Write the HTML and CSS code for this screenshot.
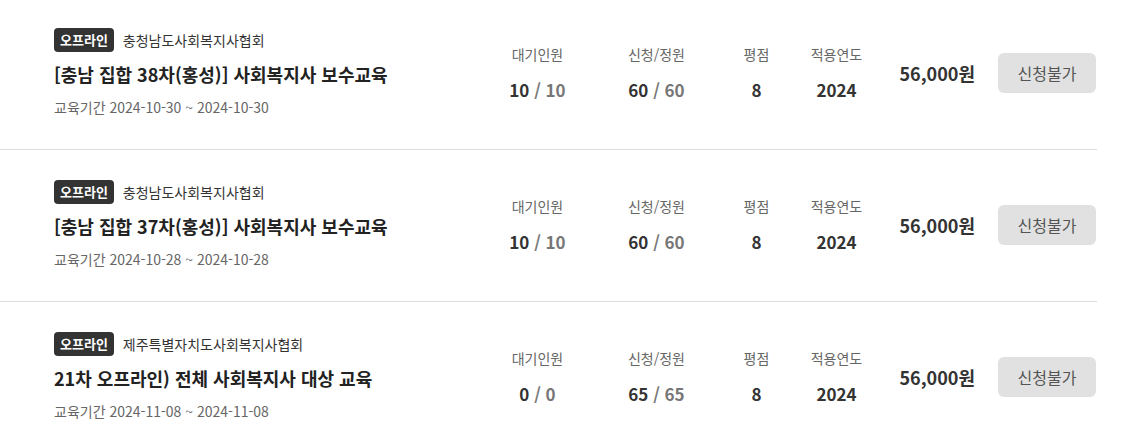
FILE: index.html
```html
<!DOCTYPE html>
<html lang="ko">
<head>
<meta charset="utf-8">
<title>교육 목록</title>
<link rel="stylesheet" href="styles.css">
</head>
<body>
<ul class="course-list">
  <li class="course">
    <div class="info">
      <div class="meta"><span class="badge">오프라인</span><span class="org">충청남도사회복지사협회</span></div>
      <h3 class="title">[충남 집합 38차(홍성)] 사회복지사 보수교육</h3>
      <p class="period">교육기간 2024-10-30 ~ 2024-10-30</p>
    </div>
    <div class="stat"><span class="label">대기인원</span><span class="value">10 <em>/ 10</em></span></div>
    <div class="stat"><span class="label">신청/정원</span><span class="value">60 <em>/ 60</em></span></div>
    <div class="stat"><span class="label">평점</span><span class="value">8</span></div>
    <div class="stat"><span class="label">적용연도</span><span class="value">2024</span></div>
    <div class="price">56,000원</div>
    <button class="apply" type="button">신청불가</button>
  </li>
  <li class="course">
    <div class="info">
      <div class="meta"><span class="badge">오프라인</span><span class="org">충청남도사회복지사협회</span></div>
      <h3 class="title">[충남 집합 37차(홍성)] 사회복지사 보수교육</h3>
      <p class="period">교육기간 2024-10-28 ~ 2024-10-28</p>
    </div>
    <div class="stat"><span class="label">대기인원</span><span class="value">10 <em>/ 10</em></span></div>
    <div class="stat"><span class="label">신청/정원</span><span class="value">60 <em>/ 60</em></span></div>
    <div class="stat"><span class="label">평점</span><span class="value">8</span></div>
    <div class="stat"><span class="label">적용연도</span><span class="value">2024</span></div>
    <div class="price">56,000원</div>
    <button class="apply" type="button">신청불가</button>
  </li>
  <li class="course">
    <div class="info">
      <div class="meta"><span class="badge">오프라인</span><span class="org">제주특별자치도사회복지사협회</span></div>
      <h3 class="title">21차 오프라인) 전체 사회복지사 대상 교육</h3>
      <p class="period">교육기간 2024-11-08 ~ 2024-11-08</p>
    </div>
    <div class="stat"><span class="label">대기인원</span><span class="value">0 <em>/ 0</em></span></div>
    <div class="stat"><span class="label">신청/정원</span><span class="value">65 <em>/ 65</em></span></div>
    <div class="stat"><span class="label">평점</span><span class="value">8</span></div>
    <div class="stat"><span class="label">적용연도</span><span class="value">2024</span></div>
    <div class="price">56,000원</div>
    <button class="apply" type="button">신청불가</button>
  </li>
</ul>
</body>
</html>
```
FILE: styles.css
```css
* { box-sizing: border-box; }
html, body {
  margin: 0;
  padding: 0;
  background: #fff;
  font-family: "Noto Sans CJK KR", "Noto Sans", sans-serif;
  color: #333;
}
.course-list {
  list-style: none;
  margin: -2px 0 0;
  padding: 0;
  width: 1097px;
}
.course {
  display: grid;
  grid-template-columns: 1fr 120px 118px 82px 78px auto 98px;
  align-items: center;
  padding: 30px 1px 31px 54px;
  border-bottom: 1px solid #dedede;
}
.info { min-width: 0; }
.meta {
  display: flex;
  align-items: center;
  height: 24px;
}
.badge {
  display: inline-block;
  height: 24px;
  line-height: 24px;
  padding: 0 6px;
  border-radius: 4px;
  background: #333;
  color: #fff;
  font-size: 13px;
  font-weight: 700;
}
.org {
  margin-left: 9px;
  font-size: 14px;
  color: #333;
}
.title {
  margin: 10px 0 0;
  font-size: 18px;
  line-height: 24px;
  font-weight: 700;
  color: #222;
  white-space: nowrap;
}
.period {
  margin: 11px 0 0;
  font-size: 14px;
  line-height: 21px;
  color: #666;
}
.stat {
  display: flex;
  flex-direction: column;
  align-items: center;
  text-align: center;
}
.label {
  font-size: 14px;
  line-height: 20px;
  color: #666;
}
.value {
  margin-top: 14px;
  font-size: 17px;
  line-height: 24px;
  font-weight: 700;
  color: #333;
}
.value em {
  font-style: normal;
  color: #777;
}
.price {
  padding: 0 23px 0 24px;
  font-size: 18px;
  font-weight: 700;
  color: #333;
}
.apply {
  width: 98px;
  height: 40px;
  border: 0;
  border-radius: 6px;
  background: #e1e1e1;
  color: #555;
  font-family: inherit;
  font-size: 16px;
}
```
